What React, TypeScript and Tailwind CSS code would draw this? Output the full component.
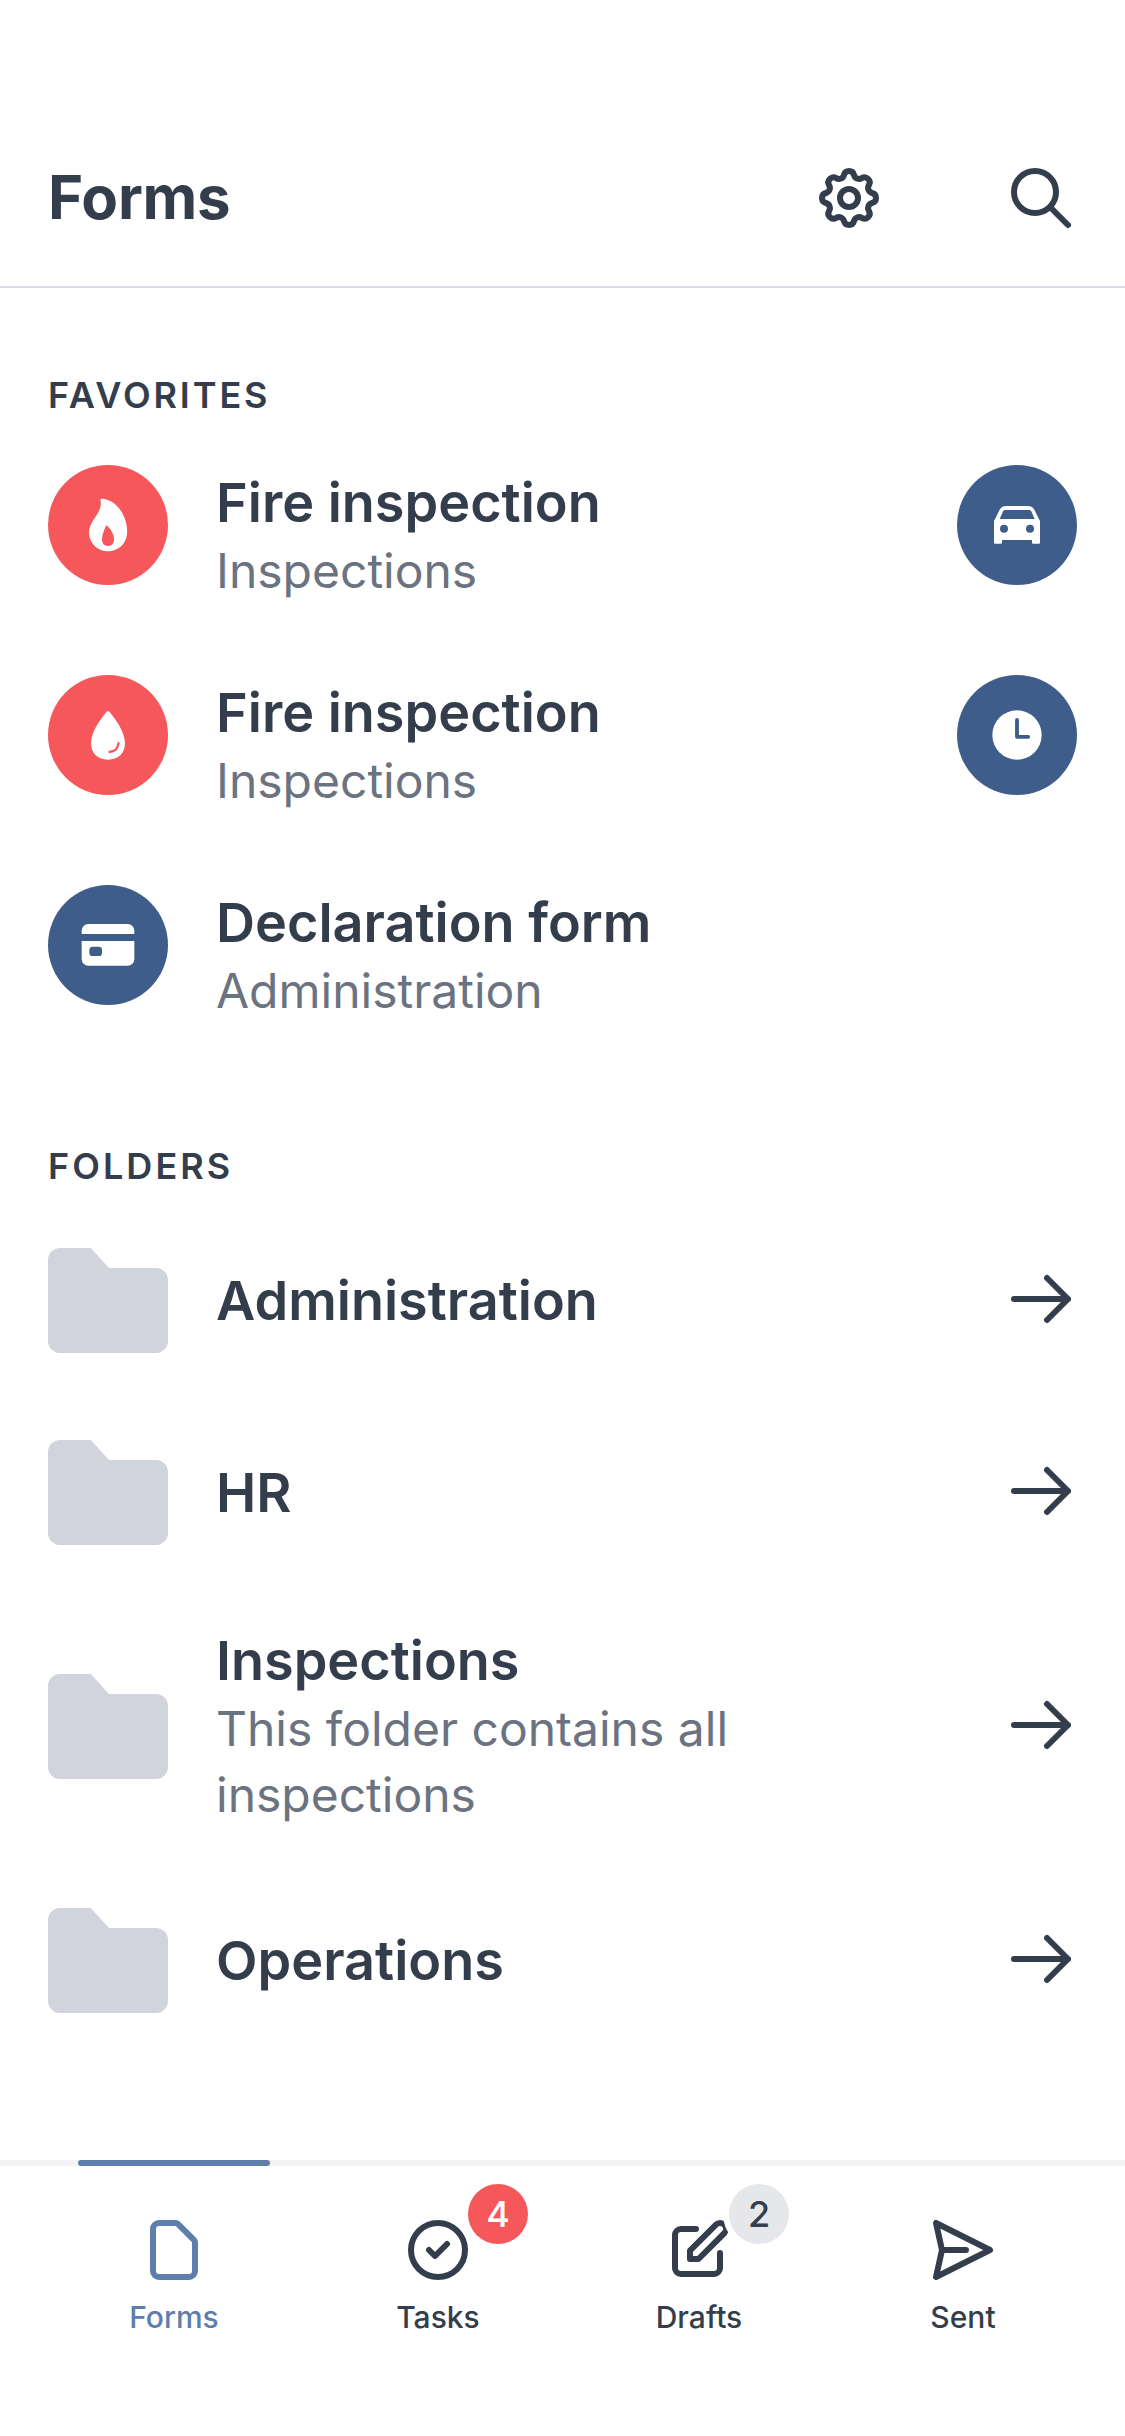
import type { ReactNode } from "react";

function LineIcon({ children, className = "" }: { children: ReactNode; className?: string }) {
  return (
    <svg
      viewBox="0 0 24 24"
      fill="none"
      stroke="currentColor"
      strokeWidth={2}
      strokeLinecap="round"
      strokeLinejoin="round"
      className={`block size-[72px] shrink-0 ${className}`}
    >
      {children}
    </svg>
  );
}

const GearIcon = () => (
  <LineIcon>
    <path d="M10.325 4.317c.426-1.756 2.924-1.756 3.35 0a1.724 1.724 0 002.573 1.066c1.543-.94 3.31.826 2.37 2.37a1.724 1.724 0 001.065 2.572c1.756.426 1.756 2.924 0 3.35a1.724 1.724 0 00-1.066 2.573c.94 1.543-.826 3.31-2.37 2.37a1.724 1.724 0 00-2.572 1.065c-.426 1.756-2.924 1.756-3.35 0a1.724 1.724 0 00-2.573-1.066c-1.543.94-3.31-.826-2.37-2.37a1.724 1.724 0 00-1.065-2.572c-1.756-.426-1.756-2.924 0-3.35a1.724 1.724 0 001.066-2.573c-.94-1.543.826-3.31 2.37-2.37.996.608 2.296.07 2.572-1.065z" />
    <circle cx="12" cy="12" r="3" />
  </LineIcon>
);
const SearchIcon = () => (
  <LineIcon>
    <path d="M21 21l-6-6m2-5a7 7 0 11-14 0 7 7 0 0114 0z" />
  </LineIcon>
);
const ArrowIcon = () => (
  <LineIcon>
    <path d="M14 5l7 7m0 0l-7 7m7-7H3" />
  </LineIcon>
);
const DocumentIcon = () => (
  <LineIcon>
    <path d="M7 21h10a2 2 0 002-2V9.414a1 1 0 00-.293-.707l-5.414-5.414A1 1 0 0012.586 3H7a2 2 0 00-2 2v14a2 2 0 002 2z" />
  </LineIcon>
);
const CheckIcon = () => (
  <LineIcon>
    <path d="M9 12l2 2 4-4m6 2a9 9 0 11-18 0 9 9 0 0118 0z" />
  </LineIcon>
);
const PencilIcon = () => (
  <LineIcon>
    <path d="M11 5H6a2 2 0 00-2 2v11a2 2 0 002 2h11a2 2 0 002-2v-5m-1.414-9.414a2 2 0 112.828 2.828L11.828 15H9v-2.828l8.586-8.586z" />
  </LineIcon>
);
const PlaneIcon = () => (
  <LineIcon className="rotate-90">
    <path d="M12 19l9 2-9-18-9 18 9-2zm0 0v-8" />
  </LineIcon>
);

/* Solid glyphs, drawn on a 360-unit disc and punched out with the disc colour. */
function Disc({ children, className }: { children: ReactNode; className: string }) {
  return (
    <div className={`size-[120px] shrink-0 rounded-full ${className}`}>
      <svg viewBox="0 0 360 360" fill="white" className="block size-full">
        {children}
      </svg>
    </div>
  );
}

const RED = "bg-[#f6575b] text-[#f6575b]";
const BLUE = "bg-[#3f5d8a] text-[#3f5d8a]";

const FlameDisc = () => (
  <Disc className={RED}>
    <path d="M158 107c-2-4 1-6 6-5.500 42 4 73.500 50 73.500 99 0 34-25 58.500-57.500 58.500s-57-24.500-57-57c0-36 40-55 35-95z" />
    <path
      fill="currentColor"
      d="M173 184c1-2.500 3-3 5-1 13 12 20 26 20 40 0 13-7 20-18 20s-18-7-18-20c0-14 7-27 11-39z"
    />
  </Disc>
);
const DropDisc = () => (
  <Disc className={RED}>
    <path d="M176.500 109.500c2-2.500 5-2.500 7 0C204 134 231 172 231 205c0 30-20 49-51 49s-51-19-51-49c0-33 27-71 47.500-95.500z" />
    <path d="M211.500 204.500c-1.500 15-12 25.500-27 26.500" fill="none" stroke="currentColor" strokeWidth="7" strokeLinecap="round" />
  </Disc>
);
const CardDisc = () => (
  <Disc className={BLUE}>
    <rect x="101" y="117" width="158" height="125" rx="20" />
    <path fill="currentColor" d="M98 147h164v21H98z" />
    <rect fill="currentColor" x="124" y="185" width="38" height="28" rx="10" />
  </Disc>
);
const CarDisc = () => (
  <Disc className={BLUE}>
    <path
      fillRule="evenodd"
      d="M149 123h62c10 0 17 2.500 21 11l17 34v64c0 3-1.500 4.500-4.500 4.500H230c-3.500 0-5-1.500-5-4.500v-7h-90v7c0 3-1.500 4.500-5 4.500h-14.500c-3 0-4.500-1.500-4.500-4.500v-64l17-34c4-8.500 11-11 21-11zm-3.500 12c-4.500 0-6.500 1.500-8 5.500L128 162h105l-9.500-21.500c-1.500-4-3.500-5.500-8-5.500zM141 179a12 12 0 100 24 12 12 0 000-24zm78 0a12 12 0 100 24 12 12 0 000-24z"
    />
  </Disc>
);
const ClockDisc = () => (
  <Disc className={BLUE}>
    <circle cx="180" cy="180" r="74" />
    <path d="M180 135v50.500h33.500" fill="none" stroke="currentColor" strokeWidth="11.500" strokeLinecap="round" strokeLinejoin="round" />
  </Disc>
);

const FolderIcon = () => (
  <svg viewBox="0 0 120 105" className="block h-[105px] w-[120px] shrink-0 fill-[#d1d4dc]">
    <path d="M12 0h30.700L61 20h47a12 12 0 0112 12v61a12 12 0 01-12 12H12A12 12 0 010 93V12A12 12 0 0112 0z" />
  </svg>
);

function Label({ title, text }: { title: string; text?: string }) {
  return (
    <div className="w-[580px]">
      <div className="text-[54px] leading-[72px] font-semibold">{title}</div>
      {text && <div className="-mt-px pb-px text-[48px] leading-[66px] text-[#6b7280]">{text}</div>}
    </div>
  );
}

const favorites = [
  { title: "Fire inspection", text: "Inspections", icon: <FlameDisc />, action: <CarDisc /> },
  { title: "Fire inspection", text: "Inspections", icon: <DropDisc />, action: <ClockDisc /> },
  { title: "Declaration form", text: "Administration", icon: <CardDisc />, action: null },
];

const folders: { title: string; text?: string }[] = [
  { title: "Administration" },
  { title: "HR" },
  { title: "Inspections", text: "This folder contains all inspections" },
  { title: "Operations" },
];

const tabs = [
  { label: "Forms", icon: <DocumentIcon />, cell: "w-[264px] text-[#5e7eab]" },
  { label: "Tasks", icon: <CheckIcon />, cell: "w-[264px]", badge: "4", tone: "bg-[#f6575b] text-white" },
  { label: "Drafts", icon: <PencilIcon />, cell: "w-[258px]", badge: "2", tone: "bg-[#e5e7eb]" },
  { label: "Sent", icon: <PlaneIcon />, cell: "w-[270px]" },
];

export default function App() {
  return (
    <div className="flex h-[2436px] w-[1125px] flex-col bg-white font-['Inter',sans-serif] text-[#343d4c]">
      <header className="flex h-[288px] items-center justify-between border-b-2 border-[#dadce3] px-12 pt-[110px]">
        <h1 className="pb-[2px] text-[60px] leading-[72px] font-bold tracking-[-0.200px]">Forms</h1>
        <div className="flex gap-[120px]">
          <GearIcon />
          <SearchIcon />
        </div>
      </header>

      <main className="flex flex-1 flex-col px-12 pt-[83px]">
        <h2 className="text-[36px] leading-[48px] font-semibold tracking-[2.900px]">FAVORITES</h2>
        <div className="mt-[46px] flex flex-col gap-[72px]">
          {favorites.map((f, i) => (
            <div key={i} className="flex h-[138px] items-start">
              {f.icon}
              <div className="ml-12 flex-1 pt-[2px]">
                <Label title={f.title} text={f.text} />
              </div>
              {f.action}
            </div>
          ))}
        </div>

        <h2 className="mt-[119px] text-[36px] leading-[48px] font-semibold tracking-[3.050px]">FOLDERS</h2>
        <div className="mt-[50.500px] flex flex-col gap-[72px]">
          {folders.map((f) => (
            <div key={f.title} className="flex min-h-[120px] items-center">
              <FolderIcon />
              <div className="ml-12 flex-1">
                <Label title={f.title} text={f.text} />
              </div>
              <div className="pb-[3px]">
                <ArrowIcon />
              </div>
            </div>
          ))}
        </div>
      </main>

      <nav className="relative flex h-[276px] shrink-0 border-t-[6px] border-[#f3f4f6] pt-12 pl-[42px]">
        <div className="absolute -top-[6px] left-[78px] h-[6px] w-[192px] rounded-full bg-[#5e7eab]" />
        {tabs.map((t) => (
          <div key={t.label} className={`flex flex-col items-center ${t.cell}`}>
            <div className="relative">
              {t.icon}
              {t.badge && (
                <span
                  className={`absolute -top-[30px] left-[66px] flex size-[60px] items-center justify-center rounded-full text-[36px] leading-none font-medium ring-[6px] ring-white ${t.tone}`}
                >
                  {t.badge}
                </span>
              )}
            </div>
            <div className="mt-[13px] text-[30px] leading-[36px] font-medium">{t.label}</div>
          </div>
        ))}
      </nav>
    </div>
  );
}
